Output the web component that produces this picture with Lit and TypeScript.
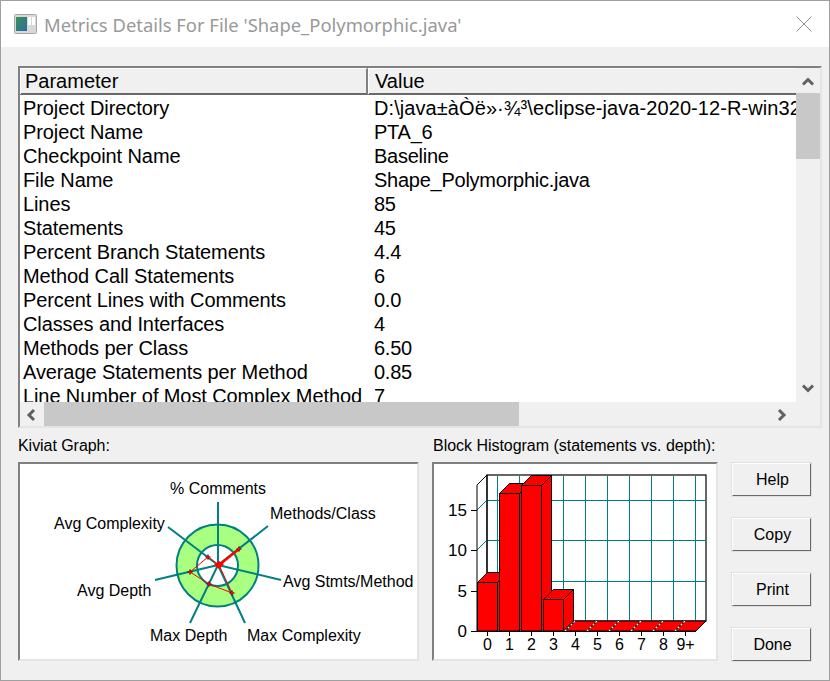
import { LitElement, html, css, svg } from "lit";
import { customElement } from "lit/decorators.js";

const ROWS: [string, string][] = [
  ["Project Directory", "D:\\java±àÒë»·¾³\\eclipse-java-2020-12-R-win32-x86_64"],
  ["Project Name", "PTA_6"],
  ["Checkpoint Name", "Baseline"],
  ["File Name", "Shape_Polymorphic.java"],
  ["Lines", "85"],
  ["Statements", "45"],
  ["Percent Branch Statements", "4.4"],
  ["Method Call Statements", "6"],
  ["Percent Lines with Comments", "0.0"],
  ["Classes and Interfaces", "4"],
  ["Methods per Class", "6.50"],
  ["Average Statements per Method", "0.85"],
  ["Line Number of Most Complex Method", "7"],
];

const AXES = [[218, 502], [268, 526], [281, 580], [245, 623], [190, 623], [155, 580], [168, 527]];
const LABELS: [string, number, number][] = [
  ["% Comments", 170, 494],
  ["Methods/Class", 270, 519],
  ["Avg Complexity", 54, 529],
  ["Avg Stmts/Method", 283, 587],
  ["Avg Depth", 77, 596],
  ["Max Depth", 150, 641],
  ["Max Complexity", 247, 641],
];
const MARKS = [[239, 549], [208, 557], [190, 572], [209, 584], [232, 593], [219, 565]];

const BARS = [
  { x: 477.5, top: 582.5 },
  { x: 499.5, top: 493.5 },
  { x: 521.5, top: 485.5 },
  { x: 543.5, top: 599.5 },
];

function kiviat() {
  return html`<svg class="chart" viewBox="20 464 397 195" width="397" height="195">
    <circle cx="217.5" cy="565.5" r="41" fill="#a8ff80" stroke="#008080" stroke-width="2"></circle>
    <circle cx="217.5" cy="565.5" r="20.5" fill="#fff" stroke="#008080" stroke-width="2"></circle>
    ${AXES.map(([x, y]) => svg`<line x1="218" y1="565" x2=${x} y2=${y} stroke="#008080" stroke-width="2"></line>`)}
    <polyline points="219,565 239,549" fill="none" stroke="#f00" stroke-width="2.5"></polyline>
    <polyline points="219,565 208,557 190,572 209,584 232,593 219,565" fill="none" stroke="#f00" stroke-width="1"></polyline>
    ${MARKS.map(([x, y]) => svg`<path d="M${x - 2.5} ${y}H${x + 2.5}M${x} ${y - 2.5}V${y + 2.5}" stroke="#000" stroke-width="1.2"></path><circle cx=${x} cy=${y} r="1.6" fill="#f00"></circle>`)}
    <path d="M214 565l5-4 5 3-5 5z" fill="#f00"></path>
    ${LABELS.map(([t, x, y]) => svg`<text x=${x} y=${y} class="lbl">${t}</text>`)}
  </svg>`;
}

function histogram() {
  const verts = [497, 519, 541, 563, 585, 607, 629, 651, 673, 695];
  const horiz = [500, 540, 581];
  const floors = [565, 587, 609, 631, 653, 675];
  const xlabels = ["0", "1", "2", "3", "4", "5", "6", "7", "8", "9+"];
  const ylabels: [string, number, number][] = [["15", 510, 516], ["10", 550, 556], ["5", 591, 597], ["0", 631, 637]];
  return html`<svg class="chart" viewBox="434 464 283 195" width="283" height="195">
    <rect x="487" y="475" width="219" height="146" fill="#fff" stroke="#000" stroke-width="1.2"></rect>
    ${verts.map((x) => svg`<rect x=${x} y="476" width="1" height="145" fill="#008080"></rect>`)}
    ${horiz.map((y) => svg`<rect x="487" y=${y} width="219" height="1" fill="#008080"></rect>`)}
    ${horiz.map((y) => svg`<line x1="477" y1=${y + 10} x2="487" y2=${y} stroke="#008080"></line>`)}
    <path d="M477 631V485L487 475V621Z" fill="none" stroke="#000" stroke-width="1"></path>
    <path d="M565 631L575 621H706L696 631Z" fill="#f00" stroke="#000" stroke-width="1"></path>
    ${floors.map((x) => svg`<line x1=${x} y1="631" x2=${x + 10} y2="621" stroke="#000" stroke-width="1.2"></line>
      <line x1=${x} y1="631" x2=${x + 10} y2="621" stroke="#fff" stroke-width="1.2" stroke-dasharray="2 2"></line>`)}
    ${BARS.map((b) => svg`<path d="M${b.x} 631V${b.top}H${b.x + 20}V631Z M${b.x} ${b.top}l10 -10H${b.x + 30}L${b.x + 20} ${b.top}Z M${b.x + 20} ${b.top}l10 -10V621L${b.x + 20} 631Z" fill="#f00" stroke="#000" stroke-width="1"></path>`)}
    <line x1="477" y1="631.5" x2="696" y2="631.5" stroke="#000"></line>
    ${xlabels.map((t, i) => svg`<line x1=${487.5 + 22 * i} y1="631" x2=${487.5 + 22 * i} y2="636" stroke="#000"></line>
      <text x=${487.5 + 22 * i} y="650" text-anchor="middle" class="lbl">${t}</text>`)}
    ${ylabels.map(([t, ty, by]) => svg`<line x1="471" y1=${ty + 0.5} x2="477" y2=${ty + 0.5} stroke="#000"></line>
      <text x="467" y=${by} text-anchor="end" class="lbl num">${t}</text>`)}
  </svg>`;
}

const chev = (d: string) => html`<svg width="24" height="24" viewBox="0 0 24 24"><path d=${d} fill="none" stroke="#606060" stroke-width="3"></path></svg>`;

@customElement("app-root")
export class AppRoot extends LitElement {
  static styles = css`
    :host {
      display: flex;
      flex-direction: column;
      width: 830px;
      height: 681px;
      box-sizing: border-box;
      border: 1px solid #a0a0a0;
      background: #f0f0f0;
      color: #000;
      font-family: "Liberation Sans", Arial, sans-serif;
      overflow: hidden;
    }
    .titlebar {
      flex: none;
      height: 46px;
      background: #fff;
      display: flex;
      align-items: center;
      padding: 0 17px 0 13px;
      gap: 7px;
    }
    .title {
      flex: 1;
      font-family: "Noto Sans", sans-serif;
      font-size: 18.4px;
      color: #999;
      white-space: nowrap;
    }
    .body {
      flex: 1;
      display: flex;
      flex-direction: column;
      padding: 19px 7px 0 17px;
      min-height: 0;
    }
    .list {
      flex: none;
      height: 362px;
      box-sizing: border-box;
      border: 2px solid;
      border-color: #808080 #e4e4e4 #e4e4e4 #808080;
      display: grid;
      grid-template-columns: 1fr 24px;
      grid-template-rows: 1fr 24px;
    }
    .view {
      overflow: hidden;
      background: #fff;
      min-width: 0;
      display: flex;
      flex-direction: column;
    }
    .head {
      flex: none;
      display: grid;
      grid-template-columns: 348px 1fr;
      height: 27px;
      box-sizing: border-box;
      background: #f0f0f0;
      border-bottom: 2px solid #696969;
      font-size: 20px;
      line-height: 25px;
    }
    .head div {
      padding-left: 6px;
      border-top: 1px solid #fff;
      border-left: 1px solid #fff;
      white-space: nowrap;
    }
    .head div:first-child {
      border-right: 2px solid #808080;
      padding-left: 4px;
    }
    .rows {
      flex: 1;
      overflow: hidden;
      padding-top: 1px;
    }
    .row {
      display: grid;
      grid-template-columns: 351px 1fr;
      height: 24px;
      line-height: 24px;
      font-size: 20px;
      letter-spacing: -0.1px;
      padding-left: 3px;
      white-space: nowrap;
    }
    .row div {
      overflow: hidden;
    }
    .row div:last-child {
      letter-spacing: -0.25px;
    }
    .row:first-child div:last-child {
      letter-spacing: 0.08px;
    }
    .bar-v {
      display: flex;
      flex-direction: column;
      background: #f0f0f0;
    }
    .bar-h {
      display: flex;
      background: #f0f0f0;
    }
    .bar-v svg,
    .bar-h svg {
      flex: none;
    }
    .bar-v svg:first-child {
      margin-bottom: 1px;
    }
    .thumb-v {
      flex: none;
      width: 24px;
      height: 66px;
      background: #c8c8c8;
    }
    .spacer {
      flex: 1;
    }
    .thumb-h {
      flex: none;
      width: 475px;
      height: 24px;
      background: #c8c8c8;
    }
    .corner {
      background: #f0f0f0;
    }
    .bottom {
      flex: none;
      display: grid;
      grid-template-columns: 401px 286px 81px;
      column-gap: 13px;
      margin-top: 6px;
    }
    .col {
      display: flex;
      flex-direction: column;
    }
    .caption {
      height: 28px;
      line-height: 23px;
      font-size: 16px;
      letter-spacing: -0.05px;
      white-space: nowrap;
    }
    .caption.shift {
      padding-left: 1px;
      letter-spacing: -0.03px;
    }
    .panel {
      height: 199px;
      box-sizing: border-box;
      border: 2px solid;
      border-color: #808080 #e4e4e4 #e4e4e4 #808080;
      background: #fff;
    }
    .chart {
      display: block;
    }
    .lbl {
      font-family: "Liberation Sans", Arial, sans-serif;
      font-size: 16px;
      fill: #000;
    }
    .num {
      font-size: 17px;
    }
    .buttons {
      display: flex;
      flex-direction: column;
      gap: 20px;
      padding-top: 28px;
    }
    .btn {
      height: 35px;
      box-sizing: border-box;
      border: 2px solid;
      border-color: #fff #696969 #696969 #fff;
      outline: 1px solid #e0e0e0;
      outline-offset: -1px;
      background: #f0f0f0;
      font-family: inherit;
      font-size: 16px;
      color: #000;
      padding: 0 0 0 2px;
    }
  `;

  render() {
    return html`
      <div class="titlebar">
        <svg width="23" height="20" viewBox="0 0 23 20">
          <defs>
            <linearGradient id="g" x1="0" y1="0" x2="1" y2="1">
              <stop offset="0" stop-color="#3d8f5a"></stop>
              <stop offset="1" stop-color="#2a6ea0"></stop>
            </linearGradient>
          </defs>
          <rect x="0.5" y="0.5" width="22" height="19" rx="1" fill="#d8d8d8" stroke="#a8a8a8"></rect>
          <rect x="2" y="3" width="11" height="14" fill="url(#g)"></rect>
          <rect x="14" y="3" width="3" height="8" fill="#fff"></rect>
          <rect x="18" y="3" width="3" height="8" fill="#fff"></rect>
        </svg>
        <span class="title">Metrics Details For File 'Shape_Polymorphic.java'</span>
        <svg width="16" height="16" viewBox="0 0 16 16"><path d="M0.5 0.5L15.5 15.5M15.5 0.5L0.5 15.5" stroke="#8c8c8c" stroke-width="1" fill="none"></path></svg>
      </div>
      <div class="body">
        <div class="list">
          <div class="view">
            <div class="head"><div>Parameter</div><div>Value</div></div>
            <div class="rows">
              ${ROWS.map(([k, v]) => html`<div class="row"><div>${k}</div><div>${v}</div></div>`)}
            </div>
          </div>
          <div class="bar-v">
            ${chev("M7 16.5L12 11.5L17 16.5")}
            <div class="thumb-v"></div>
            <div class="spacer"></div>
            ${chev("M7 7.5L12 12.5L17 7.5")}
          </div>
          <div class="bar-h">
            ${chev("M14 8L9 13L14 18")}
            <div class="thumb-h"></div>
            <div class="spacer"></div>
            ${chev("M7 8L12 13L7 18")}
          </div>
          <div class="corner"></div>
        </div>
        <div class="bottom">
          <div class="col">
            <div class="caption">Kiviat Graph:</div>
            <div class="panel">${kiviat()}</div>
          </div>
          <div class="col">
            <div class="caption shift">Block Histogram (statements vs. depth):</div>
            <div class="panel">${histogram()}</div>
          </div>
          <div class="buttons">
            <button class="btn">Help</button>
            <button class="btn">Copy</button>
            <button class="btn">Print</button>
            <button class="btn">Done</button>
          </div>
        </div>
      </div>
    `;
  }
}
